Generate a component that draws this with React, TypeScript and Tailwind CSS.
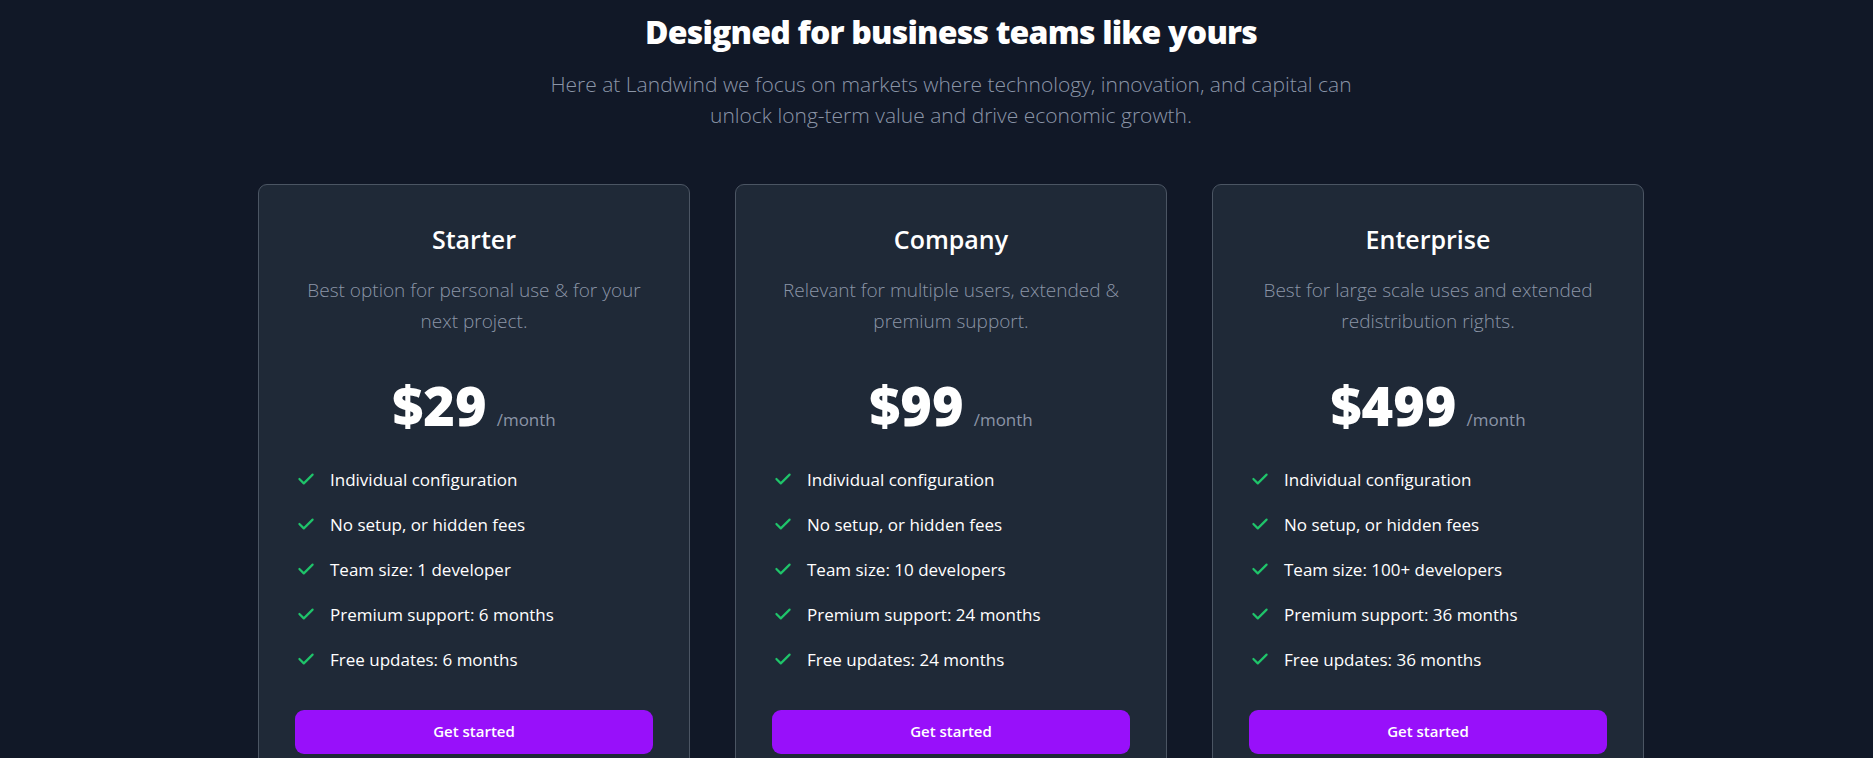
import React from "react";

type Plan = {
  name: string;
  desc: string[];
  price: string;
  features: string[];
};

const plans: Plan[] = [
  {
    name: "Starter",
    desc: ["Best option for personal use & for your", "next project."],
    price: "$29",
    features: [
      "Individual configuration",
      "No setup, or hidden fees",
      "Team size: 1 developer",
      "Premium support: 6 months",
      "Free updates: 6 months",
    ],
  },
  {
    name: "Company",
    desc: ["Relevant for multiple users, extended &", "premium support."],
    price: "$99",
    features: [
      "Individual configuration",
      "No setup, or hidden fees",
      "Team size: 10 developers",
      "Premium support: 24 months",
      "Free updates: 24 months",
    ],
  },
  {
    name: "Enterprise",
    desc: ["Best for large scale uses and extended", "redistribution rights."],
    price: "$499",
    features: [
      "Individual configuration",
      "No setup, or hidden fees",
      "Team size: 100+ developers",
      "Premium support: 36 months",
      "Free updates: 36 months",
    ],
  },
];

function Check() {
  return (
    <svg className="w-[22px] h-[22px] shrink-0 text-[#1fc46a]" fill="currentColor" viewBox="0 0 20 20">
      <path
        fillRule="evenodd"
        d="M16.707 5.293a1 1 0 010 1.414l-8 8a1 1 0 01-1.414 0l-4-4a1 1 0 011.414-1.414L8 12.586l7.293-7.293a1 1 0 011.414 0z"
        clipRule="evenodd"
      />
    </svg>
  );
}

export default function App() {
  return (
    <div className="min-h-screen bg-[#111827] text-white font-['Open_Sans',sans-serif] overflow-hidden">
      <div className="ml-[258px] w-[1386px] pt-[12px]">
        {/* Heading */}
        <div className="text-center mb-[53px]">
          <h2 className="text-[32px] leading-[40px] font-extrabold tracking-tight mb-[17px]">
            Designed for business teams like yours
          </h2>
          <p className="font-light text-[21px] leading-[31px] text-[#8b95a7]">
            <span className="block">
              Here at Landwind we focus on markets where technology, innovation, and capital can
            </span>
            <span className="block">unlock long-term value and drive economic growth.</span>
          </p>
        </div>

        {/* Plans */}
        <div className="grid grid-cols-3 gap-[45px]">
          {plans.map((p) => (
            <div
              key={p.name}
              className="flex flex-col text-center bg-[#1f2937] border border-[#4b5563] rounded-[9px] p-[36px] pb-[60px]"
            >
              <h3 className="text-[25px] leading-[36px] font-semibold mb-[18px]">{p.name}</h3>
              <p className="font-light text-[19px] leading-[31px] text-[#8b95a7]">
                {p.desc.map((d) => (
                  <span key={d} className="block whitespace-nowrap">
                    {d}
                  </span>
                ))}
              </p>
              <div className="flex items-baseline justify-center mt-[41px] mb-[33px]">
                <span className="mr-[10px] text-[54px] leading-[54px] font-extrabold">{p.price}</span>
                <span className="text-[17px] text-[#8b95a7]">/month</span>
              </div>
              <ul className="flex flex-col gap-[18px] text-left mb-[37px]">
                {p.features.map((f) => (
                  <li key={f} className="flex items-center gap-[13px] text-[17px] leading-[27px]">
                    <Check />
                    <span>{f}</span>
                  </li>
                ))}
              </ul>
              <button className="bg-[#9810fa] text-white rounded-[9px] h-[44px] text-[15px] font-semibold">
                Get started
              </button>
            </div>
          ))}
        </div>
      </div>
    </div>
  );
}
